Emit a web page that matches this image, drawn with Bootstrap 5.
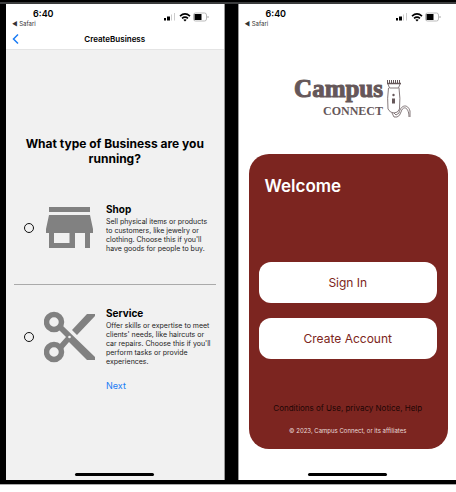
<!DOCTYPE html>
<html lang="en">
<head>
<meta charset="utf-8">
<meta name="viewport" content="width=device-width, initial-scale=1">
<title>Campus Connect</title>
<link href="https://cdn.jsdelivr.net/npm/bootstrap@5.3.0/dist/css/bootstrap.min.css" rel="stylesheet">
<style>
body{font-family:Inter,"Liberation Sans",sans-serif;color:#000;background:#fff}
.stage{background:#000;padding:0 0 4px 6px;border-bottom:1px solid #aaa}
.topline{height:2px;background:#3b3c3d;margin:2px 0 0 -6px}
.screens{gap:13px}
.screen{flex:1 1 0;min-width:0;min-height:476px;background:#fff}
.screen-business{background:#f1f1f1;border-right:1px solid #999}
.screen-login{border-left:1px solid #999}
.status{height:26px;padding:4px 15px 0 6px}
.clock{font-size:9px;line-height:11px;font-weight:600;padding-left:21px}
.return-app{font-size:6px;line-height:9px;color:#333}
.title-bar{display:grid;grid-template-columns:20px 1fr 20px;height:20px;padding:3px 6px 0;border-bottom:1px solid #e4e4e4}
.title-bar h1{font-size:8px;line-height:12px;font-weight:600}
.back{line-height:0;color:#1a7cf5}
.question{font-size:12px;line-height:15px;font-weight:700;padding:86px 16px 37px}
.choice{display:grid;grid-template-columns:10px 52px 1fr;column-gap:10px;align-items:center;padding:0 8px 0 18px}
.choice input{appearance:none;width:10px;height:10px;margin:0;border:1px solid #111;border-radius:50%;background:transparent}
.choice input:checked{background:#555}
.choice strong{font-size:10px;line-height:12px;font-weight:700;margin-bottom:2px}
.choice .about{font-size:7px;line-height:9px;color:#222;white-space:nowrap}
.rule{border-top:1px solid #aaa;margin:31px 8px 22px}
.next{font-size:9px;line-height:12px;color:#1a7cf5;margin:14px 0 0 100px}
.home-bar{width:79px;height:3px;border-radius:2px;background:#000;margin-bottom:4px}
.logo{color:#655759;font-family:"Liberation Serif",serif;font-weight:700;margin:47px 45px 0 0;gap:3px}
.logo-big{font-size:25px;line-height:24px;-webkit-text-stroke:1px #655759}
.logo-small{font-size:12px;line-height:20px}
.panel{background:#7c2520;border-radius:20px;margin:33px 8px 0 10px;padding:22px 11px 14px 10px}
.panel h2{font-size:17px;line-height:20px;font-weight:600;margin:0 0 66px 6px}
.panel .btn{font-size:12px;line-height:17px;padding:12px;border-radius:12px;background:#fff;color:#7c2520;border:0}
.panel .stack{gap:15px}
.terms{font-size:8px;line-height:12px;color:#1d0605;margin-top:43px}
.copyright{font-size:6px;line-height:9px;color:#eadcdb;margin:12px 0 0}
</style>
</head>
<body>
<div class="stage overflow-hidden">
<div class="topline"></div>
<main class="screens d-flex">
<section class="screen screen-business d-flex flex-column">
  <div class="bg-white">
    <div class="status d-flex justify-content-between">
      <div><div class="clock">6:40</div><div class="return-app">◀ Safari</div></div>
      <svg width="47" height="18" viewBox="0 0 47 18" aria-hidden="true"><path d="M2 12.500v-2.500h2v2.500zM5 12.500V8.500h3v4z"/><path fill="#ccc" d="M9 12.500V6.500h1v6zM12 12.500V5h1v7.500z"/><g fill="none" stroke="#000" stroke-width="1.600"><path d="M18 8.200q5-4.500 10 0M20 10.300q3-2.500 6 0"/></g><path d="m21.300 11.700 1.700 1.700 1.700-1.700q-1.700-1-3.400 0z"/><rect x="31.500" y="5" width="13" height="8" rx="2" fill="none" stroke="#bbb"/><path d="M32.500 6h7v6h-7z"/><path d="M46 8v2" stroke="#aaa"/></svg>
    </div>
    <div class="title-bar">
      <a class="back" href="#" aria-label="Back"><svg width="8" height="12" viewBox="0 0 8 12" fill="none" stroke="currentColor" stroke-width="1.500"><path d="M6 1.500 1.500 6 6 10.500"/></svg></a>
      <h1 class="text-center m-0">CreateBusiness</h1>
    </div>
  </div>
  <h2 class="question text-center m-0">What type of Business are you running?</h2>
  <label class="choice">
    <input type="radio" name="kind" value="shop">
    <svg width="52" height="42" viewBox="0 0 52 42" fill="#818181" aria-hidden="true"><path d="M5 0h41v5H5zM5 8h41l3 14v4h-3v15h-5V26H31v15H5V26H2v-4zM10 26v10h15.500V26z" fill-rule="evenodd"/></svg>
    <span><strong class="d-block">Shop</strong><span class="about d-block">Sell physical items or products<br>to customers, like jewelry or<br>clothing. Choose this if you'll<br>have goods for people to buy.</span></span>
  </label>
  <div class="rule"></div>
  <label class="choice">
    <input type="radio" name="kind" value="service">
    <svg width="52" height="52" viewBox="0 0 52 52" aria-hidden="true"><g fill="none" stroke="#818181" stroke-width="5.500"><circle cx="10" cy="11" r="7.500"/><circle cx="10" cy="41" r="7.500"/></g><path fill="#818181" d="m14 18 4-4 33 32v3h-8L25 31l-7 8-4-4 8-9zM28 19 43 3h8v2L33 24z"/><circle cx="25.500" cy="26" r="1.300" fill="#f1f1f1"/></svg>
    <span><strong class="d-block">Service</strong><span class="about d-block">Offer skills or expertise to meet<br>clients' needs, like haircuts or<br>car repairs. Choose this if you'll<br>perform tasks or provide<br>experiences.</span></span>
  </label>
  <a class="next align-self-start text-decoration-none" href="#">Next</a>
  <div class="home-bar mt-auto mx-auto"></div>
</section>
<section class="screen screen-login d-flex flex-column">
  <div class="status d-flex justify-content-between">
    <div><div class="clock">6:40</div><div class="return-app">◀ Safari</div></div>
    <svg width="47" height="18" viewBox="0 0 47 18" aria-hidden="true"><path d="M2 12.500v-2.500h2v2.500zM5 12.500V8.500h3v4z"/><path fill="#ccc" d="M9 12.500V6.500h1v6zM12 12.500V5h1v7.500z"/><g fill="none" stroke="#000" stroke-width="1.600"><path d="M18 8.200q5-4.500 10 0M20 10.300q3-2.500 6 0"/></g><path d="m21.300 11.700 1.700 1.700 1.700-1.700q-1.700-1-3.400 0z"/><rect x="31.500" y="5" width="13" height="8" rx="2" fill="none" stroke="#bbb"/><path d="M32.500 6h7v6h-7z"/><path d="M46 8v2" stroke="#aaa"/></svg>
  </div>
  <div class="logo d-flex align-self-end">
    <div class="text-end"><div class="logo-big">Campus</div><div class="logo-small">CONNECT</div></div>
    <svg width="25" height="44" viewBox="0 0 25 44" fill="none" stroke="#655759" aria-hidden="true"><g stroke-width="1.500"><path d="M1 6.500h14"/></g><path d="M1.500 3v3M3.500 3v3M5.500 3v3M7.500 3v3M9.500 3v3M11.500 3v3M13.500 3v3"/><g stroke-width=".8"><path d="M2 7l1.500 4h9L14 7M2.500 11Q1 21 2 32q2 4 6 4t5.500-4q1-11-.5-21M6 36l2 4h3q3-1 4-5c2-7 8-5 8 5M8 36l2 2 3-2c2-9 9-9 11-2v6"/></g><circle cx="7.500" cy="18" r="1.200" fill="#655759" stroke="none"/><rect x="6.500" y="22" width="2" height="4" fill="#655759"/></svg>
  </div>
  <div class="panel">
    <h2 class="text-white">Welcome</h2>
    <div class="stack d-grid">
      <button type="button" class="btn">Sign In</button>
      <button type="button" class="btn">Create Account</button>
    </div>
    <a class="terms d-block text-center text-decoration-none" href="#">Conditions of Use, privacy Notice, Help</a>
    <p class="copyright text-center">© 2023, Campus Connect, or its affiliates</p>
  </div>
  <div class="home-bar mt-auto mx-auto"></div>
</section>
</main>
</div>
<script src="https://cdn.jsdelivr.net/npm/bootstrap@5.3.0/dist/js/bootstrap.bundle.min.js"></script>
</body>
</html>
